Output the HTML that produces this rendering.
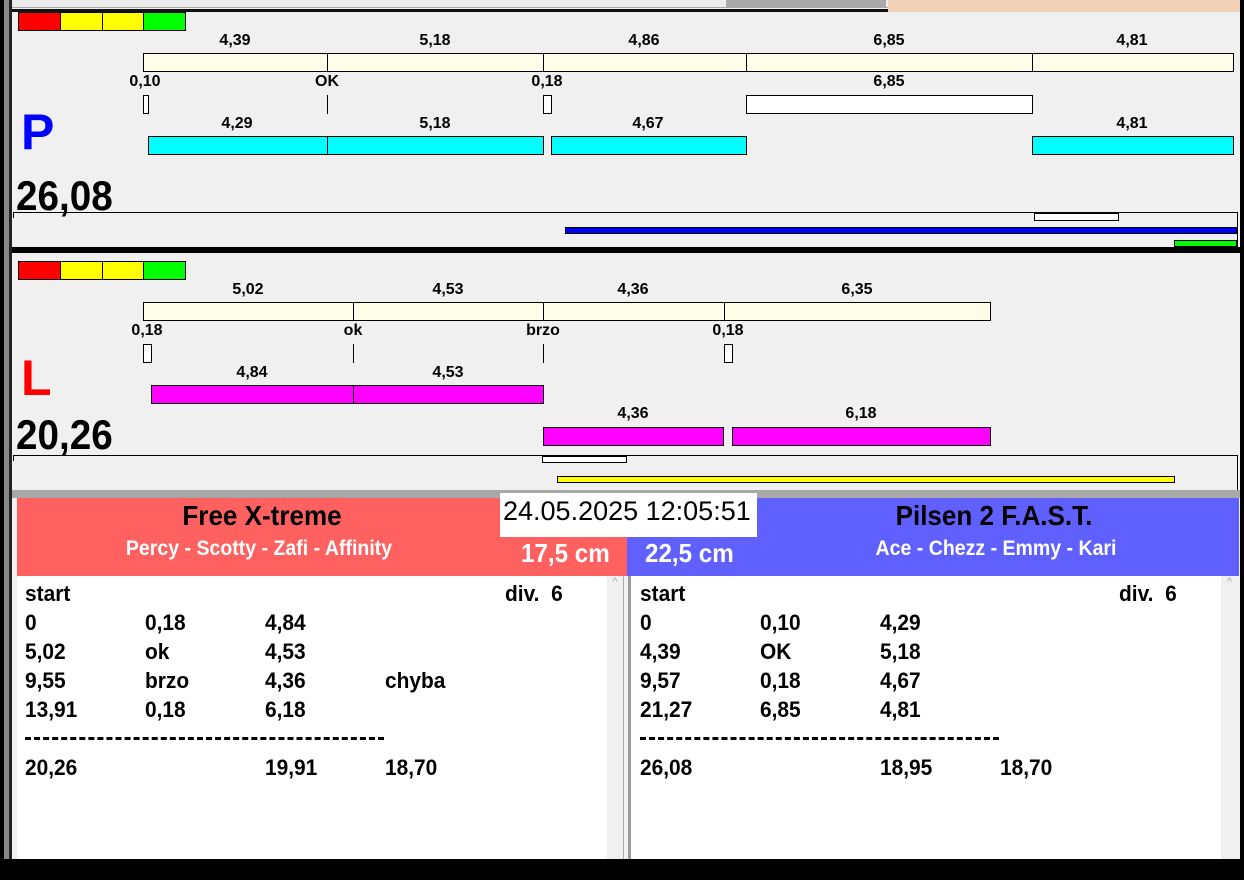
<!DOCTYPE html>
<html><head><meta charset="utf-8"><style>
*{margin:0;padding:0;box-sizing:border-box}
body{width:1244px;height:880px;position:relative;overflow:hidden;background:#f0f0f0;font-family:"Liberation Sans",Arial,sans-serif}
.a{position:absolute}
.b{position:absolute;border:1px solid #000}
.l{position:absolute;font-weight:bold;font-size:16px;transform:translateX(-50%);white-space:nowrap;line-height:18px}
.t{position:absolute;font-weight:bold;font-size:22px;line-height:24px;white-space:nowrap;transform:scaleX(.95);transform-origin:left}
</style></head><body>
<!-- frame -->
<div class="a" style="left:0;top:0;width:4px;height:880px;background:#000"></div>
<div class="a" style="left:4px;top:0;width:5px;height:880px;background:#8a8a8a"></div>
<div class="a" style="left:9px;top:0;width:3px;height:880px;background:#222"></div>
<div class="a" style="left:1240px;top:0;width:4px;height:880px;background:#000"></div>
<div class="a" style="left:12px;top:0;width:876px;height:8px;background:#ececec;border-bottom:1px solid #aaa"></div>
<div class="a" style="left:726px;top:0;width:160px;height:8px;background:#aaa"></div>
<div class="a" style="left:12px;top:9px;width:876px;height:3px;background:#111"></div>
<div class="a" style="left:888px;top:0;width:352px;height:12px;background:#f2d2b6"></div>

<!-- P panel -->
<div class="b" style="left:18px;top:12px;width:43px;height:19px;background:#f00"></div>
<div class="b" style="left:60px;top:12px;width:43px;height:19px;background:#ff0"></div>
<div class="b" style="left:102px;top:12px;width:42px;height:19px;background:#ff0"></div>
<div class="b" style="left:143px;top:12px;width:43px;height:19px;background:#0f0"></div>

<div class="l" style="left:235px;top:32px">4,39</div>
<div class="l" style="left:435px;top:32px">5,18</div>
<div class="l" style="left:644px;top:32px">4,86</div>
<div class="l" style="left:889px;top:32px">6,85</div>
<div class="l" style="left:1132px;top:32px">4,81</div>
<div class="b" style="left:143px;top:53px;width:185px;height:19px;background:#fffde8"></div>
<div class="b" style="left:327px;top:53px;width:217px;height:19px;background:#fffde8"></div>
<div class="b" style="left:543px;top:53px;width:204px;height:19px;background:#fffde8"></div>
<div class="b" style="left:746px;top:53px;width:287px;height:19px;background:#fffde8"></div>
<div class="b" style="left:1032px;top:53px;width:202px;height:19px;background:#fffde8"></div>

<div class="l" style="left:145px;top:73px">0,10</div>
<div class="l" style="left:327px;top:73px">OK</div>
<div class="l" style="left:547px;top:73px">0,18</div>
<div class="l" style="left:889px;top:73px">6,85</div>
<div class="b" style="left:143px;top:95px;width:6px;height:19px;background:#fff"></div>
<div class="a" style="left:327px;top:95px;width:1px;height:19px;background:#000"></div>
<div class="b" style="left:543px;top:95px;width:9px;height:19px;background:#fff"></div>
<div class="b" style="left:746px;top:95px;width:287px;height:19px;background:#fff"></div>

<div class="a" style="left:21px;top:104px;font-size:50px;font-weight:bold;color:#0000ff;line-height:56px">P</div>
<div class="l" style="left:237px;top:115px">4,29</div>
<div class="l" style="left:435px;top:115px">5,18</div>
<div class="l" style="left:648px;top:115px">4,67</div>
<div class="l" style="left:1132px;top:115px">4,81</div>
<div class="b" style="left:148px;top:136px;width:180px;height:19px;background:#0ff"></div>
<div class="b" style="left:327px;top:136px;width:217px;height:19px;background:#0ff"></div>
<div class="b" style="left:551px;top:136px;width:196px;height:19px;background:#0ff"></div>
<div class="b" style="left:1032px;top:136px;width:202px;height:19px;background:#0ff"></div>

<div class="a" style="left:16px;top:173px;font-size:42px;font-weight:bold;line-height:46px;transform:scaleX(.92);transform-origin:left">26,08</div>
<div class="a" style="left:13px;top:212px;width:1225px;height:36px;border-top:1px solid #000;border-right:1px solid #000"></div>
<div class="a" style="left:13px;top:212px;width:1px;height:6px;background:#000"></div>
<div class="b" style="left:1034px;top:213px;width:85px;height:8px;background:#fff"></div>
<div class="b" style="left:565px;top:227px;width:672px;height:7px;background:#0000ee"></div>
<div class="b" style="left:1174px;top:240px;width:63px;height:7px;background:#0f0"></div>
<div class="a" style="left:12px;top:247px;width:1228px;height:6px;background:#000"></div>

<!-- L panel -->
<div class="b" style="left:18px;top:261px;width:43px;height:19px;background:#f00"></div>
<div class="b" style="left:60px;top:261px;width:43px;height:19px;background:#ff0"></div>
<div class="b" style="left:102px;top:261px;width:42px;height:19px;background:#ff0"></div>
<div class="b" style="left:143px;top:261px;width:43px;height:19px;background:#0f0"></div>

<div class="l" style="left:248px;top:281px">5,02</div>
<div class="l" style="left:448px;top:281px">4,53</div>
<div class="l" style="left:633px;top:281px">4,36</div>
<div class="l" style="left:857px;top:281px">6,35</div>
<div class="b" style="left:143px;top:302px;width:211px;height:19px;background:#fffde8"></div>
<div class="b" style="left:353px;top:302px;width:191px;height:19px;background:#fffde8"></div>
<div class="b" style="left:543px;top:302px;width:182px;height:19px;background:#fffde8"></div>
<div class="b" style="left:724px;top:302px;width:267px;height:19px;background:#fffde8"></div>

<div class="l" style="left:147px;top:322px">0,18</div>
<div class="l" style="left:353px;top:322px">ok</div>
<div class="l" style="left:543px;top:322px">brzo</div>
<div class="l" style="left:728px;top:322px">0,18</div>
<div class="b" style="left:143px;top:344px;width:9px;height:19px;background:#fff"></div>
<div class="a" style="left:353px;top:344px;width:1px;height:19px;background:#000"></div>
<div class="a" style="left:543px;top:344px;width:1px;height:19px;background:#000"></div>
<div class="b" style="left:724px;top:344px;width:9px;height:19px;background:#fff"></div>

<div class="a" style="left:21px;top:350px;font-size:50px;font-weight:bold;color:#f00;line-height:56px">L</div>
<div class="l" style="left:252px;top:364px">4,84</div>
<div class="l" style="left:448px;top:364px">4,53</div>
<div class="b" style="left:151px;top:385px;width:203px;height:19px;background:#f0f"></div>
<div class="b" style="left:353px;top:385px;width:191px;height:19px;background:#f0f"></div>
<div class="l" style="left:633px;top:405px">4,36</div>
<div class="l" style="left:861px;top:405px">6,18</div>
<div class="b" style="left:543px;top:427px;width:181px;height:19px;background:#f0f"></div>
<div class="b" style="left:732px;top:427px;width:259px;height:19px;background:#f0f"></div>

<div class="a" style="left:16px;top:412px;font-size:42px;font-weight:bold;line-height:46px;transform:scaleX(.92);transform-origin:left">20,26</div>
<div class="a" style="left:13px;top:455px;width:1225px;height:36px;border-top:1px solid #000;border-right:1px solid #000"></div>
<div class="a" style="left:13px;top:455px;width:1px;height:6px;background:#000"></div>
<div class="b" style="left:542px;top:456px;width:85px;height:7px;background:#fff"></div>
<div class="b" style="left:557px;top:476px;width:618px;height:7px;background:#ff0"></div>
<div class="a" style="left:12px;top:490px;width:1228px;height:8px;background:#a8a8a8"></div>

<!-- bottom headers -->
<div class="a" style="left:17px;top:498px;width:610px;height:78px;background:#ff6060"></div>
<div class="a" style="left:627px;top:498px;width:612px;height:78px;background:#6060ff"></div>
<div class="a" style="left:500px;top:493px;width:257px;height:44px;background:#fff"></div>
<div class="a" style="left:503px;top:495px;font-size:27px;line-height:32px;white-space:nowrap">24.05.2025 12:05:51</div>
<div class="a" style="left:262px;top:500px;font-size:28px;font-weight:bold;line-height:32px;white-space:nowrap;transform:translateX(-50%) scaleX(.93)">Free X-treme</div>
<div class="a" style="left:259px;top:537px;font-size:21px;font-weight:bold;line-height:24px;color:#fff;white-space:nowrap;transform:translateX(-50%) scaleX(.93)">Percy - Scotty - Zafi - Affinity</div>
<div class="a" style="left:994px;top:500px;font-size:28px;font-weight:bold;line-height:32px;white-space:nowrap;transform:translateX(-50%) scaleX(.93)">Pilsen 2 F.A.S.T.</div>
<div class="a" style="left:996px;top:537px;font-size:21px;font-weight:bold;line-height:24px;color:#fff;white-space:nowrap;transform:translateX(-50%) scaleX(.93)">Ace - Chezz - Emmy - Kari</div>
<div class="a" style="left:521px;top:538px;font-size:26px;font-weight:bold;line-height:30px;color:#fff;white-space:nowrap;transform:scaleX(.93);transform-origin:left">17,5 cm</div>
<div class="a" style="left:645px;top:538px;font-size:26px;font-weight:bold;line-height:30px;color:#fff;white-space:nowrap;transform:scaleX(.93);transform-origin:left">22,5 cm</div>

<!-- lists -->
<div class="a" style="left:17px;top:576px;width:590px;height:283px;background:#fff"></div>
<div class="a" style="left:607px;top:576px;width:16px;height:283px;background:#f0f0f0;color:#aaa;font-size:11px;text-align:center">^</div>
<div class="a" style="left:623px;top:576px;width:8px;height:283px;background:#f0f0f0;border-left:1px solid #aaa;border-right:3px solid #9a9a9a"></div>
<div class="a" style="left:631px;top:576px;width:590px;height:283px;background:#fff"></div>
<div class="a" style="left:1221px;top:576px;width:17px;height:283px;background:#f0f0f0;color:#aaa;font-size:11px;text-align:center">^</div>
<div class="a" style="left:0;top:859px;width:1244px;height:21px;background:#000"></div>

<div class="t" style="left:25px;top:582px">start</div><div class="t" style="left:505px;top:582px">div.&nbsp; 6</div>
<div class="t" style="left:25px;top:611px">0</div><div class="t" style="left:145px;top:611px">0,18</div><div class="t" style="left:265px;top:611px">4,84</div>
<div class="t" style="left:25px;top:640px">5,02</div><div class="t" style="left:145px;top:640px">ok</div><div class="t" style="left:265px;top:640px">4,53</div>
<div class="t" style="left:25px;top:669px">9,55</div><div class="t" style="left:145px;top:669px">brzo</div><div class="t" style="left:265px;top:669px">4,36</div><div class="t" style="left:385px;top:669px">chyba</div>
<div class="t" style="left:25px;top:698px">13,91</div><div class="t" style="left:145px;top:698px">0,18</div><div class="t" style="left:265px;top:698px">6,18</div>
<div class="a" style="left:25px;top:737px;width:359px;height:3px;border-top:3px dashed #000"></div>
<div class="t" style="left:25px;top:756px">20,26</div><div class="t" style="left:265px;top:756px">19,91</div><div class="t" style="left:385px;top:756px">18,70</div>

<div class="t" style="left:640px;top:582px">start</div><div class="t" style="left:1119px;top:582px">div.&nbsp; 6</div>
<div class="t" style="left:640px;top:611px">0</div><div class="t" style="left:760px;top:611px">0,10</div><div class="t" style="left:880px;top:611px">4,29</div>
<div class="t" style="left:640px;top:640px">4,39</div><div class="t" style="left:760px;top:640px">OK</div><div class="t" style="left:880px;top:640px">5,18</div>
<div class="t" style="left:640px;top:669px">9,57</div><div class="t" style="left:760px;top:669px">0,18</div><div class="t" style="left:880px;top:669px">4,67</div>
<div class="t" style="left:640px;top:698px">21,27</div><div class="t" style="left:760px;top:698px">6,85</div><div class="t" style="left:880px;top:698px">4,81</div>
<div class="a" style="left:640px;top:737px;width:359px;height:3px;border-top:3px dashed #000"></div>
<div class="t" style="left:640px;top:756px">26,08</div><div class="t" style="left:880px;top:756px">18,95</div><div class="t" style="left:1000px;top:756px">18,70</div>
</body></html>
